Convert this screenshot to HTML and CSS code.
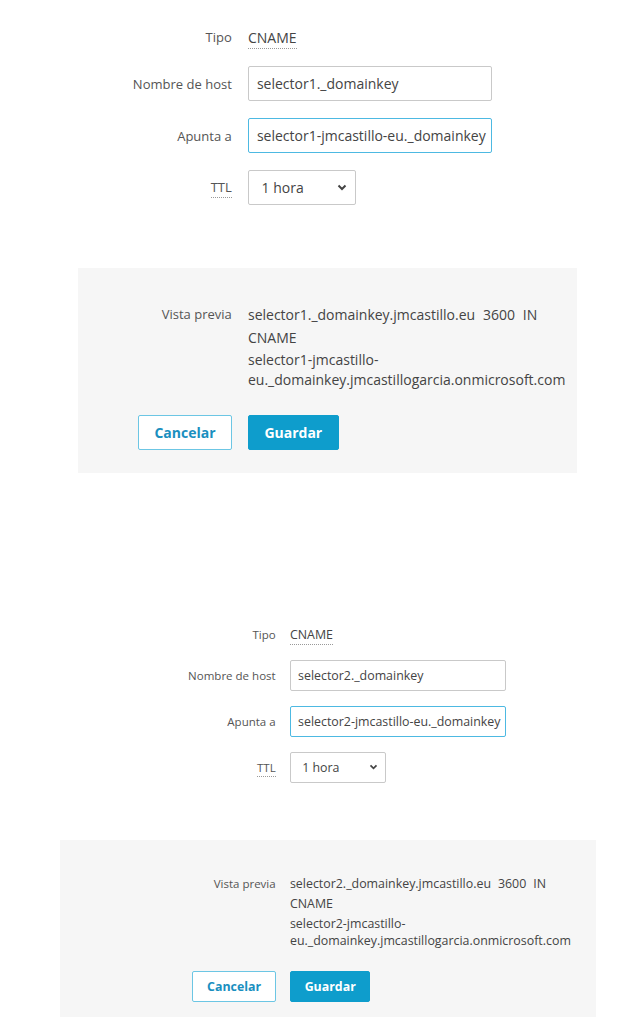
FILE: index.html
```html
<!DOCTYPE html>
<html lang="es">
<head>
  <meta charset="UTF-8">
  <meta name="viewport" content="width=device-width, initial-scale=1.0">
  <title>Registro DNS</title>
  <link rel="stylesheet" href="styles.css">
</head>
<body>
  <section class="dns-record">
    <div class="record-form">
      <div class="form-row form-row--static">
        <div class="form-label">Tipo</div>
        <div class="form-field"><span class="dotted">CNAME</span></div>
      </div>
      <div class="form-row">
        <label class="form-label" for="host1">Nombre de host</label>
        <input class="text-input" id="host1" type="text" value="selector1._domainkey">
      </div>
      <div class="form-row">
        <label class="form-label" for="target1">Apunta a</label>
        <input class="text-input is-focused" id="target1" type="text" value="selector1-jmcastillo-eu._domainkey">
      </div>
      <div class="form-row">
        <div class="form-label"><span class="dotted">TTL</span></div>
        <div class="select">
          <span>1 hora</span>
          <svg width="10" height="7" viewBox="0 0 10 7"><path d="M1.5 1.5 L5 5 L8.5 1.5" fill="none" stroke="#444" stroke-width="2"/></svg>
        </div>
      </div>
    </div>

    <div class="record-preview">
      <div class="preview-row">
        <div class="form-label">Vista previa</div>
        <div class="preview-value">
          <div class="preview-record">
            <span class="rec-part">selector1._domainkey.jmcastillo.eu</span> <span class="rec-part">3600</span> <span class="rec-part">IN</span> <span class="rec-part">CNAME</span>
          </div>
          <div class="preview-target">selector1-jmcastillo-eu._domainkey.jmcastillogarcia.onmicrosoft.com</div>
        </div>
      </div>
      <div class="form-actions">
        <div class="action-cell"><button class="btn btn-secondary" type="button">Cancelar</button></div>
        <button class="btn btn-primary" type="submit">Guardar</button>
      </div>
    </div>
  </section>

  <section class="dns-record dns-record--small">
    <div class="record-form">
      <div class="form-row form-row--static">
        <div class="form-label">Tipo</div>
        <div class="form-field"><span class="dotted">CNAME</span></div>
      </div>
      <div class="form-row">
        <label class="form-label" for="host2">Nombre de host</label>
        <input class="text-input" id="host2" type="text" value="selector2._domainkey">
      </div>
      <div class="form-row">
        <label class="form-label" for="target2">Apunta a</label>
        <input class="text-input is-focused" id="target2" type="text" value="selector2-jmcastillo-eu._domainkey">
      </div>
      <div class="form-row">
        <div class="form-label"><span class="dotted">TTL</span></div>
        <div class="select">
          <span>1 hora</span>
          <svg width="9" height="6" viewBox="0 0 10 7"><path d="M1.5 1.5 L5 5 L8.5 1.5" fill="none" stroke="#444" stroke-width="2"/></svg>
        </div>
      </div>
    </div>

    <div class="record-preview">
      <div class="preview-row">
        <div class="form-label">Vista previa</div>
        <div class="preview-value">
          <div class="preview-record">
            <span class="rec-part">selector2._domainkey.jmcastillo.eu</span> <span class="rec-part">3600</span> <span class="rec-part">IN</span> <span class="rec-part">CNAME</span>
          </div>
          <div class="preview-target">selector2-jmcastillo-eu._domainkey.jmcastillogarcia.onmicrosoft.com</div>
        </div>
      </div>
      <div class="form-actions">
        <div class="action-cell"><button class="btn btn-secondary" type="button">Cancelar</button></div>
        <button class="btn btn-primary" type="submit">Guardar</button>
      </div>
    </div>
  </section>
</body>
</html>
```

FILE: styles.css
```css
body {
  margin: 0;
  font-family: "Open Sans", Arial, sans-serif;
  color: #444;
  background: #fff;
}
.dns-record {
  font-size: 14px;
  padding-top: 25px;
}
.dns-record--small {
  font-size: 12.4px;
  padding-top: 150px;
}
.record-form {
  margin-left: 108px;
}
.form-row {
  display: flex;
  align-items: center;
  margin-bottom: 1.2em;
}
.form-row--static {
  min-height: 1.75em;
}
.form-label {
  width: 10.75em;
  flex-shrink: 0;
  padding-right: 1.24em;
  box-sizing: border-box;
  text-align: right;
  color: #555;
  font-size: 0.93em;
}
.dotted {
  border-bottom: 1px dotted #999;
  padding-bottom: 1px;
}
.form-field {
  color: #444;
}
.text-input {
  box-sizing: border-box;
  width: 17.4em;
  height: 2.5em;
  padding: 0 0.2em 0 0.57em;
  border: 1px solid #c9c9c9;
  border-radius: 2px;
  font-family: inherit;
  font-size: 1em;
  color: #444;
  background: #fff;
  outline: none;
}
.text-input.is-focused {
  border-color: #4db9e2;
}
.select {
  display: flex;
  align-items: center;
  justify-content: space-between;
  box-sizing: border-box;
  width: 7.75em;
  height: 2.5em;
  padding: 0 0.6em 0 0.9em;
  border: 1px solid #c9c9c9;
  border-radius: 2px;
  background: #fff;
}
.record-preview {
  box-sizing: border-box;
  margin-top: 4.5em;
  margin-left: 78px;
  width: 499px;
  padding: 2.5em 0 1.65em 30px;
  background: #f6f6f6;
}
.preview-row {
  display: flex;
  align-items: flex-start;
}
.preview-row .form-label {
  line-height: 1.77em;
}
.preview-value {
  flex: 1;
  padding-right: 0.8em;
}
.preview-record {
  line-height: 1.65em;
}
.rec-part {
  margin-right: 0.3em;
}
.preview-target {
  line-height: 1.36em;
  margin-top: 0.1em;
}
.form-actions {
  display: flex;
  margin-top: 1.9em;
}
.action-cell {
  display: flex;
  justify-content: flex-end;
  width: 10em;
  flex-shrink: 0;
  padding-right: 1.15em;
  box-sizing: border-box;
}
.btn {
  box-sizing: border-box;
  height: 2.5em;
  padding: 0 1.1em;
  border-radius: 2px;
  font-family: inherit;
  font-size: 1em;
  font-weight: 700;
  cursor: pointer;
}
.btn-primary {
  background: #0e9dcc;
  border: 1px solid #0e9dcc;
  color: #fff;
}
.btn-secondary {
  background: #fff;
  border: 1px solid #6cc6e4;
  color: #1a8fbf;
}
.dns-record--small .record-form {
  margin-left: 166px;
}
.dns-record--small .record-preview {
  margin-top: 4.65em;
  margin-left: 60px;
  width: 536px;
  padding-top: 2.7em;
  padding-left: 106px;
  padding-bottom: 1.2em;
}
.dns-record--small .form-actions {
  margin-top: 1.75em;
}
```
